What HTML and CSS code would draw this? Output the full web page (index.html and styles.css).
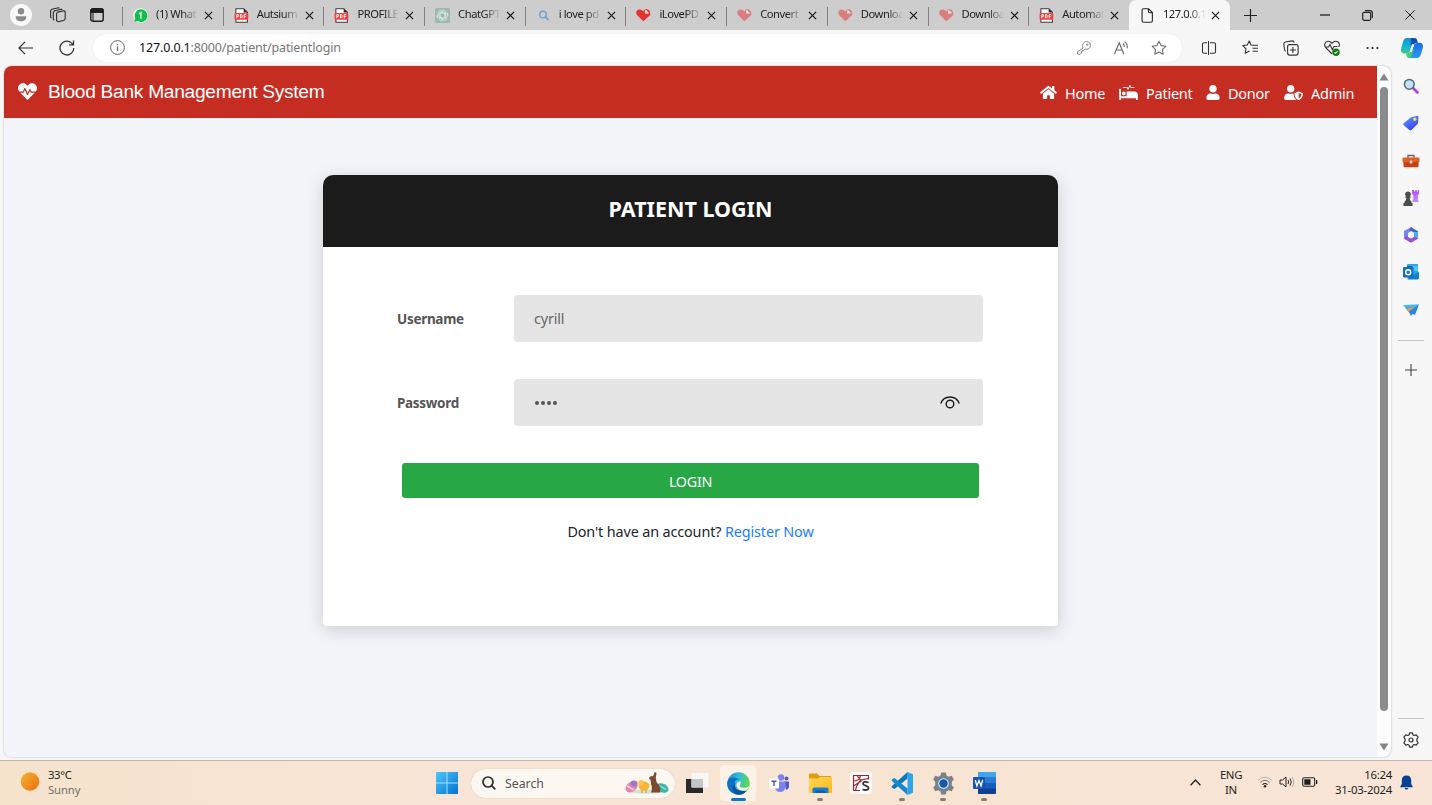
FILE: index.html
```html
<!DOCTYPE html>
<html lang="en">
<head>
<meta charset="utf-8">
<title>Blood Bank Management System</title>
<link rel="stylesheet" href="styles.css">
</head>
<body>
<svg class="defs" width="0" height="0">
  <defs>
    <linearGradient id="gSun" x1="0" y1="0" x2="1" y2="1"><stop offset="0" stop-color="#f2b632"/><stop offset="1" stop-color="#ee6a10"/></linearGradient>
    <linearGradient id="gWin" x1="0" y1="0" x2="1" y2="1"><stop offset="0" stop-color="#4cc8fb"/><stop offset="1" stop-color="#0471d0"/></linearGradient>
    <linearGradient id="gEdge" x1="0" y1="0" x2="1" y2=".3"><stop offset="0" stop-color="#1b8fd8"/><stop offset=".55" stop-color="#2fc0d4"/><stop offset="1" stop-color="#62d94e"/></linearGradient>
    <linearGradient id="gCo1" x1="0" y1="0" x2="0" y2="1"><stop offset="0" stop-color="#1a8fd6"/><stop offset=".5" stop-color="#14b3d5"/><stop offset="1" stop-color="#35c98a"/></linearGradient>
    <linearGradient id="gCo2" x1="0" y1="0" x2="0" y2="1"><stop offset="0" stop-color="#1c6fd8"/><stop offset="1" stop-color="#2b98fa"/></linearGradient>
    <linearGradient id="gTag" x1="0" y1="0" x2=".6" y2="1"><stop offset="0" stop-color="#5aa6f8"/><stop offset="1" stop-color="#3d3df0"/></linearGradient>
    <linearGradient id="gFold" x1="0" y1="0" x2="1" y2="1"><stop offset="0" stop-color="#ffd95c"/><stop offset="1" stop-color="#f9b916"/></linearGradient>
    <linearGradient id="gRook" x1="0" y1="0" x2="0" y2="1"><stop offset="0" stop-color="#b04dff"/><stop offset="1" stop-color="#c98af5"/></linearGradient>
    <linearGradient id="gPlane" x1="0" y1="0" x2="0" y2="1"><stop offset="0" stop-color="#4cc4f2"/><stop offset="1" stop-color="#1878e0"/></linearGradient>
    <symbol id="x" viewBox="0 0 10 10"><path d="M1 1l8 8M9 1L1 9" fill="none" stroke="#1c1c1c" stroke-width="1.4"/></symbol>
    <symbol id="pdf" viewBox="0 0 16 16"><path d="M2 .7h8.5l3.800 3.800v10.800H2z" fill="#fff" stroke="#3a3a3a" stroke-width="1.1"/><path d="M10.300.7v4h4z" fill="#222"/><rect x=".6" y="5.200" width="14.600" height="7.300" rx="1" fill="#fb3a3d"/><path d="M3 10.900V7h1.600v2H3M6.800 7v3.600h1l.8-.8V7.700L7.800 7zM10.800 10.900V7H13M10.800 9h1.800" fill="none" stroke="#fff" stroke-width="1"/></symbol>
    <symbol id="love" viewBox="0 0 16 15"><path d="M7.800 13.500L1.300 7.200C-.7 4.800.4 1.300 3.600 1 5.700.8 7 2 7.900 3.200L9.300 1.200 15.500 5.800q-.2 1.200-1.200 1.900z" fill="#e5322d"/><path d="M9.600.8c3-.6 5.600 1.500 5.600 4.600L10.400 5.600z" fill="#e5322d"/><path d="M10 .900l3.900 4.300-4.100.3z" fill="#fff"/></symbol>
    <symbol id="star" viewBox="0 0 16 16"><path d="M8 1.3l2.1 4.3 4.7.7-3.4 3.3.8 4.7L8 12.1l-4.2 2.2.8-4.7L1.2 6.3l4.7-.7z" fill="none" stroke="currentColor" stroke-width="1.1" stroke-linejoin="round"/></symbol>
  </defs>
</svg>

<div class="screen">
  <header class="tabstrip">
    <div class="strip-tools">
      <svg class="avatar" viewBox="0 0 22 22"><circle cx="11" cy="11" r="11" fill="#f8f8f8"/><circle cx="11" cy="7.300" r="3.200" fill="#8a8a8a"/><path d="M5.800 12.300h10.400c.6 3-2 5-5.200 5s-5.800-2-5.200-5z" fill="#8a8a8a"/></svg>
      <svg width="16" height="16" viewBox="0 0 16 16" fill="none" stroke="#2c2c2c" stroke-width="1.1" stroke-linejoin="round"><path d="M6.600 6.300l1-1.200 6.400-1.300 1.200.9v7.300l-1.200 1.300-5.600 1.500-1.800-1z"/><path d="M4.300 13.200l-1-.8V5.300l1.300-1.500 6.800-1.500 1 .8M1.400 11l-.8-.8V3.700L2 2.200 8.500.7l1 .7"/></svg>
      <svg width="14" height="14" viewBox="0 0 14 14"><rect x=".8" y=".8" width="12.400" height="12.400" rx="2" fill="none" stroke="#1b1b1b" stroke-width="1.4"/><path d="M1 1.200h12v3.200H1zM3 5v8" stroke="#1b1b1b" fill="#1b1b1b"/></svg>
    </div>
    <div class="tab"><svg class="fav" viewBox="0 0 16 16"><circle cx="8" cy="8" r="7.800" fill="#f0fff2"/><path d="M1.500 14.700l1-3.500A6.800 6.800 0 1 1 5 13.900z" fill="#11bf4e"/><path d="M6.400 6.200L8.400 5v6.400" stroke="#fff" stroke-width="1.500" fill="none"/></svg><span class="tab-text">(1) What</span><svg class="tab-x"><use href="#x"/></svg></div>
    <div class="tab"><svg class="fav"><use href="#pdf"/></svg><span class="tab-text">Autsium</span><svg class="tab-x"><use href="#x"/></svg></div>
    <div class="tab"><svg class="fav"><use href="#pdf"/></svg><span class="tab-text">PROFILE</span><svg class="tab-x"><use href="#x"/></svg></div>
    <div class="tab"><svg class="fav" viewBox="0 0 16 16"><rect width="16" height="16" rx="2" fill="#9bb9ad"/><g fill="none" stroke="#e4efea" stroke-width=".9"><path id="petal" d="M8 2.500c2-.6 3.600.6 3.600 2.400v4L8.600 10.600"/><use href="#petal" transform="rotate(60 8 8)"/><use href="#petal" transform="rotate(120 8 8)"/><use href="#petal" transform="rotate(180 8 8)"/><use href="#petal" transform="rotate(240 8 8)"/><use href="#petal" transform="rotate(300 8 8)"/></g></svg><span class="tab-text">ChatGPT</span><svg class="tab-x"><use href="#x"/></svg></div>
    <div class="tab"><svg class="fav" viewBox="0 0 16 16"><circle cx="7.500" cy="7" r="3.500" fill="none" stroke="#6f9fd0" stroke-width="1.5"/><path d="M10 9.500l3.200 3.300" stroke="#6f9fd0" stroke-width="1.800"/></svg><span class="tab-text">i love pd</span><svg class="tab-x"><use href="#x"/></svg></div>
    <div class="tab"><svg class="fav"><use href="#love"/></svg><span class="tab-text">iLovePD</span><svg class="tab-x"><use href="#x"/></svg></div>
    <div class="tab"><svg class="fav faded"><use href="#love"/></svg><span class="tab-text">Convert</span><svg class="tab-x"><use href="#x"/></svg></div>
    <div class="tab"><svg class="fav faded"><use href="#love"/></svg><span class="tab-text">Downloa</span><svg class="tab-x"><use href="#x"/></svg></div>
    <div class="tab"><svg class="fav faded"><use href="#love"/></svg><span class="tab-text">Downloa</span><svg class="tab-x"><use href="#x"/></svg></div>
    <div class="tab"><svg class="fav"><use href="#pdf"/></svg><span class="tab-text">Automat</span><svg class="tab-x"><use href="#x"/></svg></div>
    <div class="tab active"><svg class="fav" viewBox="0 0 16 16"><path d="M3.700.8h5.500l4 4v8.900q0 1.500-1.500 1.500H3.700q-1.500 0-1.500-1.500V2.300Q2.200.8 3.700.8zM9 1v2.700q0 1.300 1.300 1.300H13" fill="none" stroke="#2a2a2a" stroke-width="1.200"/></svg><span class="tab-text">127.0.0.1</span><svg class="tab-x"><use href="#x"/></svg></div>
    <div class="newtab"><svg width="13" height="13" viewBox="0 0 13 13"><path d="M6.500 0v13M0 6.500h13" stroke="#222" stroke-width="1.200"/></svg></div>
    <div class="winctl">
      <svg width="10" height="10" viewBox="0 0 10 10"><path d="M0 5h10" stroke="#111" stroke-width="1.200"/></svg>
      <svg width="11" height="11" viewBox="0 0 11 11" fill="none" stroke="#222" stroke-width="1.200"><rect x=".7" y="2.300" width="8" height="8" rx="1.500"/><path d="M3 .7h5q2.300 0 2.300 2.300v5"/></svg>
      <svg width="10" height="10" viewBox="0 0 10 10"><path d="M.4.4l9.200 9.200M9.600.4L.4 9.600" stroke="#222" stroke-width="1"/></svg>
    </div>
  </header>

  <div class="toolbar">
    <div class="navbtns">
      <svg width="15" height="14" viewBox="0 0 15 14" fill="none" stroke="#333" stroke-width="1.200"><path d="M15 7H1M7 .8L.9 7 7 13.200"/></svg>
      <svg width="16" height="16" viewBox="0 0 16 16" fill="none" stroke="#333" stroke-width="1.300"><path d="M14.800 8A6.900 6.900 0 1 1 12.700 3.100L14.200 4.600M14.500.5v4.400h-4.400"/></svg>
    </div>
    <div class="address">
      <svg width="15" height="15" viewBox="0 0 15 15" fill="none" stroke="#666"><circle cx="7.500" cy="7.500" r="6.900"/><path d="M7.500 6.500v4.500M7.500 4v1.300" stroke-width="1.300"/></svg>
      <span class="url"><b>127.0.0.1</b>:8000/patient/patientlogin</span>
      <div class="addr-icons">
        <svg width="14" height="14" viewBox="0 0 14 14" fill="none" stroke="#777" stroke-width=".9"><path d="M6 7.200C4.800 3.500 6.500.6 9.500.6c2.300 0 3.900 1.700 3.900 3.900 0 2.900-2.700 4.300-5.400 3.600L6.900 9.200H5.600v1.500H4.200v1.500l-.9 1H.7v-2.500z"/><circle cx="10.300" cy="3.700" r=".8"/></svg>
        <svg width="16" height="14" viewBox="0 0 16 14" fill="none" stroke="#666" stroke-width="1.100"><path d="M1.500 13L6.200 1.800 10.800 13M3.100 9h6.100M10 2.500c1.200 1 1.400 2.200 1.200 3.500M11.600.6c2.400 1.700 3 4 2.500 6.700"/></svg>
        <svg class="star grey" width="16" height="16"><use href="#star"/></svg>
      </div>
    </div>
    <div class="tools">
      <svg width="16" height="14" viewBox="0 0 16 14" fill="none" stroke="#333" stroke-width="1.100"><path d="M6 1.700H3.100Q1.500 1.700 1.500 3.300v7.400q0 1.600 1.600 1.600H6M9 1.700h3.900q1.600 0 1.600 1.600v7.400q0 1.600-1.600 1.600H9M7.500 0v14"/></svg>
      <svg width="16" height="15" viewBox="0 0 16 15" fill="none" stroke="#333" stroke-width="1.100"><path d="M11 5.200L9 5 7.200 1 5.300 5 .8 5.600 4 8.800l-.8 4.500L7.500 11M11 5.300h5M10.500 8.300H16M10.500 11.300H16" stroke-linejoin="round"/></svg>
      <svg width="16" height="16" viewBox="0 0 16 16" fill="none" stroke="#333" stroke-width="1.100"><rect x="4.600" y="4.600" width="10.500" height="10.500" rx="2"/><path d="M9.900 7v6M7 10h6M2.700 11.300Q1.700 10.800 1.500 9.500L.8 4.200Q.7 2.400 2.400 2L9 .9q1.700-.1 2.200 1.800"/></svg>
      <svg width="16" height="16" viewBox="0 0 16 16" fill="none" stroke="#333" stroke-width="1.100"><path d="M8 14L2 8C-.5 5 1 1.200 4.200 1.200 6 1.200 7 2 8 3.300 9 2 10 1.200 11.800 1.200 15 1.200 16.300 4.500 14.600 7M1.500 7h3l1.500-2.500 2.300 5L10 6.500h3.500"/><circle cx="12" cy="12.200" r="3.700" fill="#127c13" stroke="none"/><path d="M10.500 12.300l1 1 2-2" stroke="#fff"/></svg>
      <svg width="13" height="4" viewBox="0 0 13 4" fill="#222"><circle cx="1.600" cy="2" r="1.100"/><circle cx="6.500" cy="2" r="1.100"/><circle cx="11.400" cy="2" r="1.100"/></svg>
    </div>
    <svg class="copilot" viewBox="0 0 22 20"><path d="M6 0h8L9.500 11.500C8.500 14.500 7.500 15.500 5 15.500H3C.5 15.500-.6 13 .3 9.800l1.700-6C2.800 1 4 0 6 0z" fill="url(#gCo1)"/><path d="M16 20H8l4.500-11.500C13.500 5.500 14.500 4.800 17 4.800h2c2.500 0 3.600 2.500 2.700 5.500l-1.800 6C19.200 19 18 20 16 20z" fill="url(#gCo2)"/><path d="M10 0h3.500c2 0 2.800 1.500 3.300 4.800C14 4.800 13 5.500 12 8L9.500 7z" fill="#0f4fae"/><path d="M5 15.500c3 0 4-1.500 5-4.500l2.500 1-2 5.500c-.6 1.700-1 2.500-2.500 2.500C6.300 20 5.500 18 5 15.500z" fill="#46cd7c"/><path d="M11 6.300h2L10.800 14h-2z" fill="#eefaff"/></svg>
  </div>

  <div class="middle">
    <div class="frame">
      <main class="page">
        <nav class="navbar">
          <a class="brand"><svg width="19" height="19" viewBox="0 0 512 512" fill="#fff"><path d="M320.200 243.800l-49.700 99.400c-6 12.100-23.400 11.700-28.900-.6l-56.900-126.300-30 71.700H60.600l182.500 186.500c7.100 7.300 18.600 7.300 25.700 0L451.400 288H342.300l-22.100-44.200zM473.700 73.900l-2.400-2.500c-51.500-52.600-135.800-52.600-187.400 0L256 100l-27.900-28.500c-51.500-52.700-135.900-52.700-187.400 0l-2.400 2.400C-10.400 123.700-12.500 203 31 256h102.400l35.900-86.200c5.400-12.900 23.600-13.200 29.400-.4l58.200 129.300 49-97.900c5.900-11.800 22.700-11.800 28.600 0l27.600 55.200H481c43.500-53 41.400-132.300-7.300-182.100z"/></svg><span>Blood Bank Management System</span></a>
          <div class="links">
            <a><svg width="17" height="15" viewBox="0 0 576 512"><path d="M280.370 148.260L96 300.110V464a16 16 0 0 0 16 16l112.060-.29a16 16 0 0 0 15.920-16V368a16 16 0 0 1 16-16h64a16 16 0 0 1 16 16v95.640a16 16 0 0 0 16 16.050L464 480a16 16 0 0 0 16-16V300L295.670 148.260a12.190 12.190 0 0 0-15.300 0zM571.600 251.470L488 182.560V44.050a12 12 0 0 0-12-12h-56a12 12 0 0 0-12 12v72.610L318.470 43a48 48 0 0 0-61 0L4.340 251.470a12 12 0 0 0-1.600 16.900l25.500 31A12 12 0 0 0 45.150 301l235.220-193.740a12.190 12.190 0 0 1 15.300 0L530.900 301a12 12 0 0 0 16.900-1.600l25.500-31a12 12 0 0 0-1.700-16.930z"/></svg><span class="w-home">Home</span></a>
            <a><svg width="19" height="15" viewBox="0 0 640 512"><path d="M528 224H272c-8.800 0-16 7.200-16 16v144H64V144c0-8.800-7.200-16-16-16H16c-8.800 0-16 7.200-16 16v352c0 8.800 7.200 16 16 16h32c8.800 0 16-7.200 16-16v-48h512v48c0 8.800 7.200 16 16 16h32c8.800 0 16-7.200 16-16V336c0-61.900-50.100-112-112-112zM136 96h126.100l27.600 55.200c5.900 11.800 22.700 11.800 28.600 0L368 51.800 390.100 96H512c8.800 0 16-7.200 16-16s-7.200-16-16-16H409.900L382.300 8.800C376.400-3 359.600-3 353.700 8.800L304 108.200l-19.900-39.800c-1.400-2.700-4.100-4.400-7.200-4.400H136c-4.400 0-8 3.600-8 8v16c0 4.400 3.600 8 8 8zm24 256c35.300 0 64-28.700 64-64s-28.700-64-64-64-64 28.700-64 64 28.700 64 64 64z"/></svg><span class="w-patient">Patient</span></a>
            <a><svg width="14" height="15" viewBox="0 0 448 512"><path d="M224 256c70.700 0 128-57.300 128-128S294.700 0 224 0 96 57.300 96 128s57.300 128 128 128zm89.600 32h-16.700c-22.200 10.200-46.900 16-72.900 16s-50.600-5.800-72.900-16h-16.700C60.200 288 0 348.200 0 422.400V464c0 26.500 21.500 48 48 48h352c26.500 0 48-21.500 48-48v-41.600c0-74.200-60.200-134.400-134.400-134.400z"/></svg><span class="w-donor">Donor</span></a>
            <a><svg width="19" height="15" viewBox="0 0 640 512"><path d="M622.300 271.100l-115.200-45c-4.100-1.600-12.600-3.700-22.200 0l-115.200 45c-10.700 4.200-17.700 14-17.700 24.900 0 111.600 68.700 188.800 132.900 213.900 9.600 3.700 18 1.600 22.200 0C558.400 489.900 640 420.500 640 296c0-10.900-7-20.700-17.700-24.900zM496 462.400V273.300l95.500 37.300c-5.600 87.100-60.900 135.400-95.500 151.800zM224 256c70.700 0 128-57.300 128-128S294.700 0 224 0 96 57.300 96 128s57.300 128 128 128zm96 40c0-2.500.8-4.800 1.100-7.200-2.500-.1-4.900-.8-7.500-.8h-16.700c-22.200 10.200-46.900 16-72.900 16s-50.600-5.800-72.900-16h-16.700C60.200 288 0 348.200 0 422.400V464c0 26.500 21.500 48 48 48h352c6.800 0 13.300-1.500 19.200-4-54-42.900-99.200-116.700-99.200-212z"/></svg><span class="w-admin">Admin</span></a>
          </div>
        </nav>
        <section class="card">
          <h2 class="card-head">PATIENT LOGIN</h2>
          <form class="card-body">
            <div class="row"><label>Username</label><div class="input"><span>cyrill</span></div></div>
            <div class="row"><label>Password</label><div class="input"><span class="dots"><i></i><i></i><i></i><i></i></span><svg width="20" height="13" viewBox="0 0 20 13" fill="none" stroke="#1d1d1d" stroke-width="1.400"><path d="M.7 7.500C2.300 3.200 5.800 1 10 1s7.700 2.200 9.300 6.500"/><circle cx="10" cy="8" r="3.800"/></svg></div></div>
            <div class="login">LOGIN</div>
            <p class="hint">Don't have an account? <a>Register Now</a></p>
          </form>
        </section>
      </main>
      <div class="scroll">
        <svg width="10" height="8" viewBox="0 0 10 8"><path d="M5 .5L9.500 7.500H.5z" fill="#858585"/></svg>
        <div class="thumb"></div>
        <svg width="10" height="8" viewBox="0 0 10 8"><path d="M5 7.500L9.500.5H.5z" fill="#858585"/></svg>
      </div>
    </div>
    <aside class="sidebar">
      <svg viewBox="0 0 16 16"><path d="M10 10l4.500 4.500" stroke="#b43ce8" stroke-width="2.600" stroke-linecap="round"/><circle cx="6.300" cy="6.300" r="4.900" fill="#bfe4fa" stroke="#5f6670" stroke-width="1.500"/></svg>
      <svg viewBox="0 0 16 16"><path d="M8 2.300L14.500.7q1 0 1 1L15 8.500 8.500 15q-1 .9-2 0L.7 10.300q-.8-1 0-2z" fill="url(#gTag)"/><circle cx="11.800" cy="4.300" r="1.700" fill="#f8dc4c"/></svg>
      <svg class="wide" viewBox="0 0 17 16"><path d="M5.500 5V2.500h6V5" fill="none" stroke="#6b625e" stroke-width="1.300"/><rect x="0" y="4.500" width="17" height="5" rx="1" fill="#e0602a"/><path d="M1 9h15v4q0 1.200-1 1.200H2q-1 0-1-1.200z" fill="#c8400e"/><rect x="7.200" y="7.500" width="2.600" height="3" rx=".6" fill="#ddd"/></svg>
      <svg class="wide" viewBox="0 0 16 16"><path d="M9 0h2v1.500h1.300V0h1.500v1.500H15V0h1v4l-1.200 1v4.500L16 12H9l1.300-2.500V5L9 4z" fill="url(#gRook)"/><g fill="#4b4b4b"><circle cx="5" cy="4.200" r="2.800"/><path d="M2.300 6.500h5.400v1.300H6.600q0 3 2 4.200v1H1.400v-1q2-1.200 2-4.200H2.300zM.5 13h9v3h-9z"/></g></svg>
      <svg viewBox="0 0 16 16"><path d="M8 .3L1 4v7l4 2.500V6L11 2.500z" fill="#7186ee"/><path d="M8 .3l7 4v7.200l-4-2.300V5.500L6 3z" fill="#3e63cf"/><path d="M15 8v3.700l-7 4-7-4 2-3 5 2.800 3-2z" fill="#9a50cf"/><path d="M15 5v6.500l-4-2.500V5z" fill="#49b2e8"/><path d="M8 4.700l3 1.700v3.300l-3 1.800-3-1.800V6.400z" fill="#f6f6f6"/></svg>
      <svg viewBox="0 0 16 16"><rect x="4" y="0" width="11" height="14" rx="1" fill="#2ba5e8"/><path d="M4 2h5.500v5H4z" fill="#0a67b8"/><path d="M9.500 2H15v5H9.500z" fill="#4cc4f6"/><path d="M4 15l12-7v6.500l-1 1H5z" fill="#1280cf"/><rect x="0" y="3" width="10.500" height="10.500" rx="1.200" fill="#0f70c5"/><circle cx="5.200" cy="8.200" r="2.500" fill="none" stroke="#fff" stroke-width="1.600"/></svg>
      <svg viewBox="0 0 16 16"><path d="M0 3l16-.8L8 14l-2-4z" fill="url(#gPlane)"/><path d="M3 7.200l9.500-2.700L5.300 10z" fill="#f2a32b"/><path d="M5.300 10L16 2.500 12 13z" fill="#2c82e8"/></svg>
      <hr>
      <svg class="plus" viewBox="0 0 12 12"><path d="M6 0v12M0 6h12" stroke="#444" stroke-width="1.100"/></svg>
      <div class="push"></div>
      <hr>
      <svg class="cog" viewBox="0 0 16 16" fill="none" stroke="#333" stroke-width="1.200" stroke-linejoin="round"><path d="M6.600.8h2.800l.5 2 1.300.7 2-.6 1.900 2.300-1.200 1.900v1.800l1.200 1.900-1.900 2.300-2-.6-1.300.7-.5 2H6.600l-.5-2-1.300-.7-2 .6L.9 10.800l1.200-1.900V7.100L.9 5.200l1.900-2.300 2 .6 1.300-.7z"/><circle cx="8" cy="8" r="2"/></svg>
    </aside>
  </div>

  <footer class="taskbar">
    <div class="weather"><svg width="20" height="20" viewBox="0 0 20 20"><circle cx="10" cy="9.500" r="9.300" fill="url(#gSun)"/></svg><div><div>33°C</div><div class="sub">Sunny</div></div></div>
    <div class="apps">
      <svg class="win" width="22" height="22" viewBox="0 0 22 22" fill="url(#gWin)"><path d="M1 0H22V21q0 1-1 1H1q-1 0-1-1V1Q0 0 1 0z"/><path d="M10.500 0h1v22h-1zM0 10.500h22v1H0z" fill="#a9def5"/></svg>
      <div class="search"><svg width="14" height="14" viewBox="0 0 14 14" fill="none" stroke="#2b2b2b" stroke-width="1.700"><circle cx="6" cy="6" r="5"/><path d="M9.600 9.600L13.300 13.300"/></svg><span>Search</span>
        <svg class="easter" width="44" height="22" viewBox="0 0 44 22"><ellipse cx="22" cy="19.500" rx="18" ry="2" fill="#cfe3cf"/><ellipse cx="6.500" cy="15" rx="6.500" ry="4.800" transform="rotate(-35 6.500 15)" fill="#e981ae"/><ellipse cx="9" cy="11.500" rx="3.500" ry="3" fill="#9a79c4"/><path d="M2 14l7 4" stroke="#f6cfdd" stroke-width="1.500"/><ellipse cx="37.500" cy="16" rx="6.300" ry="4.300" transform="rotate(25 37.500 16)" fill="#39b7a9"/><path d="M34 13.500l7 4" stroke="#9be0d0" stroke-width="1.300"/><ellipse cx="19" cy="14" rx="5.500" ry="4.500" fill="#fbb335"/><circle cx="16" cy="10.800" r="2.800" fill="#fcc44a"/><path d="M17 18v3M21 18v3" stroke="#e8852e"/><path d="M24 6.500C25 4 27 3.500 28 4.500L29.500.3q2-.6 2 1L30.700 6c1 2 0 3 1.500 5 3 3 4 6 2.700 9.500h-9c1-2 1-4 .8-6.500-1.500-2.500-.4-4-1.200-6z" fill="#7c4a31"/></svg>
      </div>
      <div class="app"><svg width="23" height="22" viewBox="0 0 23 22"><rect x="0" y="7" width="17" height="14" fill="#292929"/><rect x="5.500" y="1" width="17" height="14.500" rx="1" fill="#f7f7f7"/><path d="M5.500 7H17v8.500H5.500z" fill="#c6c6c6"/></svg></div>
      <div class="app current"><svg width="23" height="23" viewBox="0 0 23 23"><circle cx="11.500" cy="11.500" r="11.200" fill="url(#gEdge)"/><path d="M.4 10C2 4.500 8 4.500 12.500 7.500 8 7 6.500 11 8 15c1.500 4 6.500 6 11.500 4.300A11.200 11.200 0 0 1 .4 10z" fill="#0f6fc4"/><path d="M8.500 10.500C6 15 10 20.500 19.500 18.500 16 23.500 9 23.500 6.500 19.500 4.500 16.500 6 12 8.500 10.500z" fill="#0b4fa0"/><path d="M13.500 9.500C14.500 12 12 13 13 14.500c1.500 2 6 2 9.300-.5-1 2.500-1.800 3.500-3.300 4.500-5 1-10-2-9.500-6 .3-2 2-3.400 4-3z" fill="#fbf1e6"/></svg></div>
      <div class="app"><svg width="20" height="19" viewBox="0 0 20 19"><circle cx="12" cy="3.500" r="3.200" fill="#7b83eb"/><circle cx="17.500" cy="4.500" r="2" fill="#5059c9"/><path d="M15 7.500h5v5q-.4 3-3 3.300z" fill="#5059c9"/><path d="M7 7.500h9.500V13q-.8 5-5.500 5-4 0-5-4z" fill="#7b83eb"/><rect x="0" y="4.500" width="10" height="10" rx="1" fill="#fff"/><path d="M2.500 7.200h5M5 7.200V12" stroke="#4b53bc" stroke-width="1.400"/></svg></div>
      <div class="app run"><svg width="23" height="21" viewBox="0 0 23 21"><path d="M0 1.500Q0 .5 1 .5h7l2.500 2.500H22v6H0z" fill="#e29d0c"/><path d="M0 5.500h9L11 4h11q1 0 1 1v14q0 1-1 1H1q-1 0-1-1z" fill="url(#gFold)"/><path d="M3.500 20v-4q0-1.500 1.500-1.500h13q1.500 0 1.500 1.500v4z" fill="#1681d3"/><path d="M6.500 17.500h10V20h-10z" fill="#0b5ba6"/></svg></div>
      <div class="app"><svg width="22" height="22" viewBox="0 0 22 22"><rect width="22" height="22" rx="3" fill="#fafafa"/><path d="M10 18.500H3.500V3.500h15v4M3.500 9c5 0 6.500-2.500 7-5.500M7 3.500l3.500 4.500 8-1.500M5.500 18.500c0-5 3-6 5-10.500M3.500 14l8-5" fill="none" stroke="#9b2432" stroke-width="1.200"/><path d="M18.500 10.500c-3-1-5.500-.8-5.500 1.200 0 2.300 5.500 1.500 5.500 4.300 0 2.300-3.500 2.300-6 1.500" fill="none" stroke="#333" stroke-width="1.800"/></svg></div>
      <div class="app run"><svg width="23" height="23" viewBox="0 0 23 23"><path d="M16.500 0L22 2.300v18.400L16.500 23z" fill="#2da5ee"/><path d="M16.500 0v6.500L3.500 17 .7 15.500v-1.200z" fill="#0a78be"/><path d="M16.500 23v-6.500L3.500 6 .7 7.500v1.200z" fill="#1488d0"/></svg></div>
      <div class="app run"><svg width="23" height="23" viewBox="0 0 23 23"><path d="M9.300.5h4.400l.8 3 2.200 1.200 3-.9 2.200 3.800-2.100 2.200v3.400l2.100 2.200-2.200 3.800-3-.9-2.200 1.200-.8 3H9.300l-.8-3-2.200-1.200-3 .9-2.200-3.800 2.100-2.200V9.800L1.100 7.600l2.200-3.800 3 .9 2.200-1.200z" fill="#78828b"/><circle cx="11.500" cy="11.500" r="5.300" fill="#dfe3e6"/><circle cx="11.500" cy="11.500" r="4.200" fill="#0d5cae"/></svg></div>
      <div class="app run"><svg width="23" height="22" viewBox="0 0 23 22"><rect x="5" y="0" width="18" height="22" rx="1.500" fill="#1a5dbe"/><path d="M5 1.500Q5 0 6.500 0h15Q23 0 23 1.500v4H5z" fill="#41a5ee"/><path d="M5 5.500h18V11H5z" fill="#2b7cd3"/><path d="M5 16.500h18v4q0 1.500-1.500 1.500h-15Q5 22 5 20.500z" fill="#103f91"/><rect x="0" y="5" width="12" height="12" rx="1" fill="#1755ad"/><path d="M2.300 8l1.600 6L6 8.500 8.100 14 9.700 8" fill="none" stroke="#fff" stroke-width="1.300"/></svg></div>
    </div>
    <div class="tray">
      <svg width="11" height="7" viewBox="0 0 11 7"><path d="M.6 6.200L5.500 1l4.900 5.200" fill="none" stroke="#222" stroke-width="1.300"/></svg>
      <div class="lang">ENG<br>IN</div>
      <svg width="16" height="12" viewBox="0 0 16 12" fill="none"><path d="M1 4.500q7-6.500 14 0" stroke="#c3b6aa"/><path d="M3.300 6.500q4.700-4.400 9.400 0" stroke="#777"/><path d="M5.500 8.600q2.500-2.200 5 0" stroke="#222" stroke-width="1.200"/><circle cx="8" cy="10.300" r="1.300" fill="#222"/></svg>
      <svg width="16" height="12" viewBox="0 0 16 12" fill="none" stroke="#222"><path d="M1 4h2.500L7 1v10L3.500 8H1zM9 4q1.200 2 0 4"/><path d="M11 2.500q2.500 3.500 0 7"/><path d="M13 1q3.500 5 0 10" stroke="#b5a79b"/></svg>
      <svg width="16" height="10" viewBox="0 0 16 10"><rect x=".7" y=".7" width="12" height="8.600" rx="1.600" fill="none" stroke="#222" stroke-width="1.100"/><path d="M2.300 2.300H8.500v5.400H2.300zM14 3h1.300v4H14z" fill="#1d1d1d"/></svg>
      <div class="clock">16:24<br>31-03-2024</div>
      <svg width="13" height="15" viewBox="0 0 13 15" fill="#053f96"><path d="M6.500.5c3 0 4.700 2 4.700 4.500v4l1.500 2.500v.8H.3v-.8L1.800 9V5c0-2.500 1.700-4.500 4.700-4.500zM4.500 13h4q-.4 1.500-2 1.500t-2-1.500z"/></svg>
    </div>
  </footer>
</div>
</body>
</html>
```

FILE: styles.css
```css
* { box-sizing: border-box; }
body { margin: 0; font-family: "Noto Sans", "Open Sans", sans-serif; overflow: hidden; }
svg { display: block; flex: none; }
.defs { position: absolute; }
.screen { width: 1432px; height: 805px; display: flex; flex-direction: column; background: #f7f7f7; }

/* tab strip */
.tabstrip { height: 30px; background: #cdcdcd; display: flex; align-items: center; flex: none; }
.strip-tools { width: 122px; display: flex; align-items: center; padding-left: 10px; gap: 18px; flex: none; }
.strip-tools svg:last-child { margin-left: 6px; }
.avatar { width: 22px; height: 22px; }
.tab { width: 100.7px; height: 30px; display: flex; align-items: center; padding-left: 11px; flex: none; background: linear-gradient(#808080, #808080) 0 60% / 1px 19px no-repeat; }
.fav { width: 15px; height: 15px; }
.faded { opacity: .5; }
.tab-text { width: 44px; margin: -2px 0 0 8px; white-space: nowrap; font-size: 11.2px; line-height: 16px; letter-spacing: -.45px; color: #222; -webkit-mask-image: linear-gradient(90deg, #000 60%, transparent 96%); mask-image: linear-gradient(90deg, #000 60%, transparent 96%); }
.tab-x { width: 9px; height: 9px; margin-left: 4px; }
.active { background: #f7f7f7; border-radius: 7px 7px 0 0; }
.newtab { width: 42px; display: flex; justify-content: center; }
.winctl { margin-left: auto; display: flex; align-items: center; gap: 32px; padding-right: 17px; }

/* toolbar */
.toolbar { height: 36px; display: flex; align-items: center; flex: none; padding-bottom: 1px; }
.navbtns { width: 93px; display: flex; align-items: center; gap: 26px; padding-left: 18px; }
.address { width: 1089px; height: 28px; border-radius: 14px; background: #fff; display: flex; align-items: center; padding: 0 15px 0 17px; box-shadow: 0 0 2px #e6e6e6; }
.url { margin-left: 14px; font-size: 12.5px; letter-spacing: -.15px; color: #767676; white-space: nowrap; }
.url b { font-weight: 400; color: #111; }
.addr-icons { margin-left: auto; display: flex; align-items: center; gap: 22px; }
.grey { color: #6e6e6e; }
.tools { display: grid; grid-template-columns: repeat(5, 41px); justify-items: center; align-items: center; margin-left: 6px; }
.copilot { width: 22px; height: 20px; margin-left: 8px; }

/* page area */
.middle { height: 695px; display: flex; flex: none; border-bottom: 1px solid #bfb9b4; }
.frame { width: 1387px; height: 691px; margin-left: 4px; border-radius: 8px; overflow: hidden; display: flex; background: #fcfcfc; box-shadow: 0 0 2px #aaa; flex: none; }
.page { width: 1373px; background: #f3f4f9; }
.navbar { height: 52px; background: #c52d23; display: flex; align-items: center; justify-content: space-between; padding: 0 22px 0 14px; }
.brand { display: flex; align-items: center; gap: 11px; color: #fff; font: 19.2px "Liberation Sans", Arial, sans-serif; letter-spacing: -.3px; white-space: nowrap; }
.brand svg { margin-top: -2px; }
.links { display: flex; gap: 14px; padding-top: 1px; }
.links a { display: flex; align-items: center; gap: 8px; color: #fff; fill: #fff; font-size: 14.5px; letter-spacing: -.25px; white-space: nowrap; }
.links span { line-height: 20px; }
.w-home { width: 40px; }
.w-patient { width: 46px; }
.w-donor { width: 42px; }
.w-admin { width: 44px; }
.card { width: 735px; height: 451px; margin: 57px 0 0 319px; background: #fff; border-radius: 10px 10px 4px 4px; box-shadow: 0 4px 18px rgba(0,0,0,.16); }
.card-head { margin: 0; height: 72px; background: #1b1b1b; border-radius: 10px 10px 0 0; color: #fff; text-align: center; font-size: 21.5px; line-height: 67px; font-weight: 700; }
.card-body { padding: 48px 74px 0; }
.row { display: flex; align-items: center; margin-bottom: 37px; height: 47px; }
.row label { width: 117px; font-size: 13.5px; font-weight: 700; color: #555; letter-spacing: -.3px; }
.input { width: 469px; height: 47px; background: #e5e5e5; border-radius: 4px; padding: 0 23px 0 20px; display: flex; align-items: center; justify-content: space-between; font-size: 14.4px; letter-spacing: -.15px; color: #666; }
.dots { display: flex; gap: 2px; padding: 1px 0 0 1px; }
.dots i { width: 4px; height: 4px; border-radius: 50%; background: #555; }
.login { margin: 0 5px; height: 35px; line-height: 37px; border-radius: 3px; background: #28a745; color: #fff; text-align: center; font-size: 14.3px; letter-spacing: -.25px; }
.hint { margin: 23px 0 0; text-align: center; font-size: 14.4px; letter-spacing: -.13px; line-height: 21px; color: #212529; }
.hint a { color: #1a7efb; }
.scroll { width: 14px; display: flex; flex-direction: column; align-items: center; padding: 7px 0 6px; }
.thumb { width: 8px; height: 624px; border-radius: 4px; background: #8b8b8b; margin-top: 6px; margin-bottom: auto; }
.sidebar { width: 41px; display: flex; flex-direction: column; align-items: center; padding: 12px 1px 0 0; }
.sidebar svg { width: 16px; height: 16px; margin-bottom: 21.3px; }
.sidebar .wide { width: 18px; }
.sidebar hr { width: 26px; height: 1px; border: 0; background: #c9c9c9; margin: 1px 0 0; }
.sidebar .plus { width: 12px; height: 12px; margin: 23px 0 0; }
.push { flex: 1; }
.sidebar .cog { margin: 13px 0 12px; }

/* taskbar */
.taskbar { flex: 1; display: flex; align-items: center; background: linear-gradient(90deg, #f5e3cc, #f9e5d7 32%, #f8e4d2 60%, #f9e5d7); }
.weather { width: 436px; display: flex; align-items: center; gap: 8px; padding-left: 20px; font-size: 11.3px; line-height: 15px; color: #222; letter-spacing: -.35px; }
.weather, .tray { padding-bottom: 2px; }
.sub { color: #777069; letter-spacing: -.1px; }
.apps { display: flex; align-items: center; width: 590px; }
.search { width: 204px; height: 29px; margin: 0 0 0 13px; border-radius: 15px; background: #fdf7f1; box-shadow: 0 0 1px #bba99a; display: flex; align-items: center; padding: 0 6px 0 11px; font-size: 12.3px; color: #555; }
.search span { margin-left: 9px; }
.easter { margin-left: auto; }
.app { width: 36px; height: 36px; margin-left: 5px; border-radius: 4px; display: grid; place-items: center; position: relative; }
.search + .app { margin-left: 4px; }
.app.current { background: #fcf1e7; }
.app.run::after, .app.current::after { content: ""; position: absolute; bottom: 0; width: 6px; height: 3px; border-radius: 2px; background: #887d74; }
.app.current::after { width: 15px; background: #0b78d0; }
.tray { margin-left: auto; display: flex; align-items: center; padding-right: 19px; font-size: 11.4px; line-height: 15px; color: #222; }
.lang { width: 32px; text-align: center; margin: 0 10px 0 14px; letter-spacing: -.35px; }
.tray .lang + svg + svg { margin: 0 7px 0 6px; }
.clock { width: 60px; margin: 0 8px 0 14px; text-align: right; white-space: nowrap; letter-spacing: -.25px; }
```
